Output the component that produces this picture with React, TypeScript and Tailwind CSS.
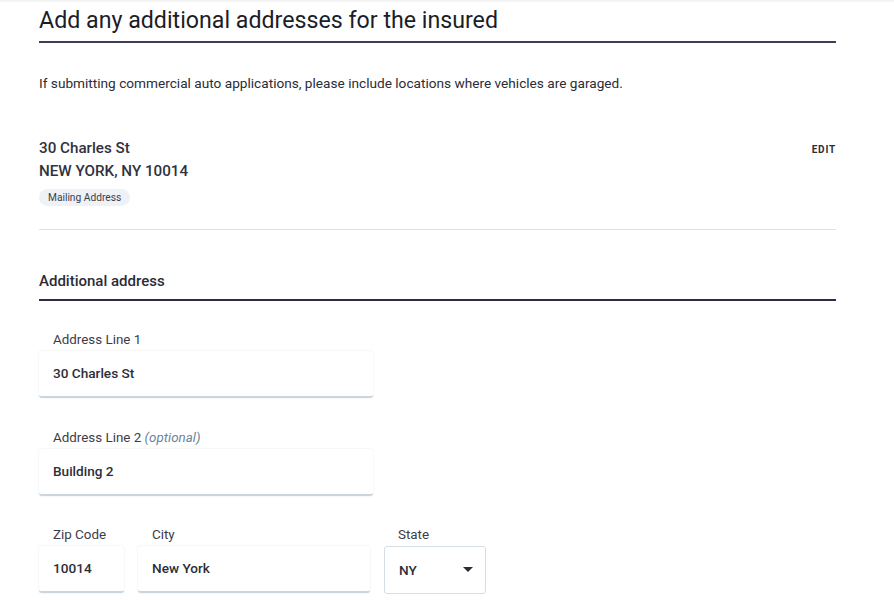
import React from "react";

function Field({ label, optional, value, className }: { label: string; optional?: boolean; value: string; className: string }) {
  return (
    <div className={className}>
      <div className="pl-[14px] h-[21px] text-[13.4px] leading-[20px] text-[#3b3d4a]">
        {label}
        {optional && <span className="italic text-[#6b8499]"> (optional)</span>}
      </div>
      <div className="h-[47px] bg-white rounded-[3px] border-b-2 border-[#c9d6df] shadow-[0_0_2px_rgba(30,40,60,0.12)] flex items-center pl-[14px] text-[13.6px] font-medium text-[#2c2e39]">
        {value}
      </div>
    </div>
  );
}

export default function App() {
  return (
    <div className="w-[894px] h-[600px] bg-white overflow-hidden relative font-['Roboto',sans-serif]">
      <div className="absolute top-0 left-0 right-0 h-[3px] bg-gradient-to-b from-[#f0f0f0] to-white" />
      <div className="pl-[39px] w-[836px]">
        <h1 className="pt-[5px] text-[23.2px] leading-[30px] text-[#1c1d28] font-normal">Add any additional addresses for the insured</h1>
        <div className="mt-[6px] h-[2px] bg-[#3c3e58]" />
        <p className="mt-[31px] text-[13.65px] leading-[18px] text-[#2b2d38]">
          If submitting commercial auto applications, please include locations where vehicles are garaged.
        </p>
        <div className="mt-[45px] flex justify-between items-start">
          <div>
            <div className="text-[15.2px] leading-[23px] font-medium text-[#30323d]">30 Charles St</div>
            <div className="text-[15.2px] leading-[23px] font-medium text-[#30323d]">NEW YORK, NY 10014</div>
            <div className="mt-[6px] inline-flex items-center h-[17px] px-[9px] rounded-full bg-[#eef1f5] text-[10.2px] text-[#3b3d4a]">Mailing Address</div>
          </div>
          <div className="mt-[5px] text-[10px] font-bold tracking-[0.08em] text-[#2a2c37]">EDIT</div>
        </div>
        <div className="mt-[21px] h-px bg-[#dbe2e8]" />
        <div className="mt-[41px] text-[15px] leading-[20px] font-medium text-[#2a2c37]">Additional address</div>
        <div className="mt-[8px] h-[2px] bg-[#2b2d48]" />
        <Field className="mt-[29px] w-[334px]" label="Address Line 1" value="30 Charles St" />
        <Field className="mt-[30px] w-[334px]" label="Address Line 2" optional value="Building 2" />
        <div className="mt-[29px] flex gap-[14px]">
          <Field className="w-[85px]" label="Zip Code" value="10014" />
          <Field className="w-[232px]" label="City" value="New York" />
          <div className="w-[102px]">
            <div className="pl-[14px] h-[21px] text-[13.4px] leading-[20px] text-[#3b3d4a]">State</div>
            <div className="h-[48px] bg-white rounded-[3px] border border-[#d6dee5] flex items-center justify-between pl-[14px] pr-[12px] text-[13.6px] font-medium text-[#2c2e39]">
              NY
              <svg width="10" height="5" viewBox="0 0 10 5"><path d="M0 0 L10 0 L5 5 Z" fill="#2a2c37" /></svg>
            </div>
          </div>
        </div>
      </div>
    </div>
  );
}
